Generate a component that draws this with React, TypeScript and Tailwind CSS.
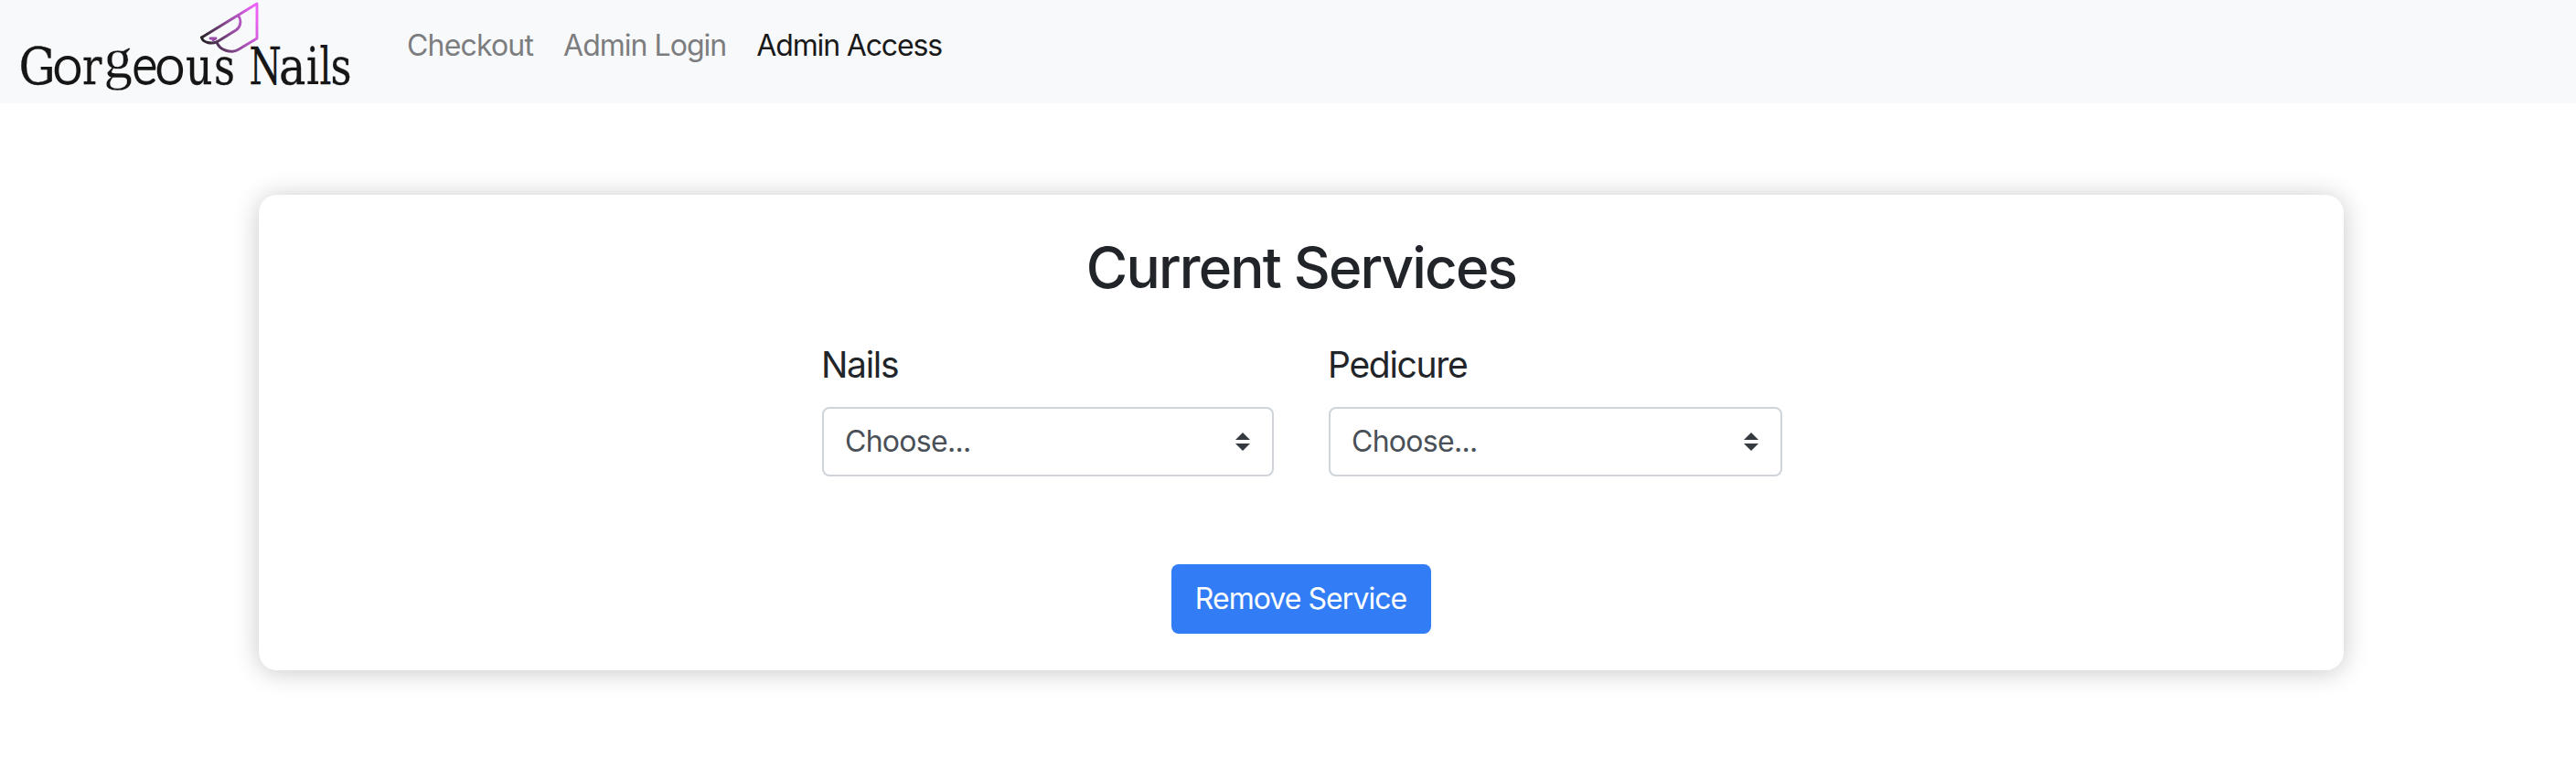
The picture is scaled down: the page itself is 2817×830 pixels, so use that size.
import React from "react";

type Glyph = { ch: string; x: number; y?: number; sx: number; face?: "slab" | "round" | "book" };

const letters: Glyph[] = [
  { ch: "G", x: 20.5, sx: 0.9 },
  { ch: "o", x: 57.5, sx: 0.98, face: "round" },
  { ch: "r", x: 90, sx: 0.8 },
  { ch: "g", x: 113.5, y: 85, sx: 0.98, face: "book" },
  { ch: "e", x: 144.5, sx: 0.88, face: "round" },
  { ch: "o", x: 169.5, sx: 0.98, face: "round" },
  { ch: "u", x: 203, sx: 0.82 },
  { ch: "s", x: 234, sx: 0.8 },
  { ch: "N", x: 272.5, sx: 0.72 },
  { ch: "a", x: 305, sx: 0.88 },
  { ch: "i", x: 335, sx: 0.78 },
  { ch: "l", x: 349.5, sx: 0.72 },
  { ch: "s", x: 361.5, sx: 0.8 },
];

const faces = {
  slab: "font-['DejaVu_Serif',serif] text-[56px] stroke-[#161616] stroke-[0.3px]",
  round: "font-['Lato',sans-serif] font-light text-[60px] stroke-[#161616] stroke-[1.8px]",
  book: "font-['Liberation_Serif',serif] text-[64px] stroke-[#f8f9fb] stroke-[0.3px]",
};

function Logo() {
  return (
    <svg width="445" height="113" viewBox="0 0 445 113" className="shrink-0" aria-label="Gorgeous Nails">
      <defs>
        <linearGradient id="nail" gradientUnits="userSpaceOnUse" x1="220" y1="44" x2="281" y2="20">
          <stop offset="0" stopColor="#242024" />
          <stop offset="0.5" stopColor="#8b4a96" />
          <stop offset="1" stopColor="#ea62f7" />
        </linearGradient>
      </defs>
      <g fill="#161616">
        {letters.map((l, i) => (
          <text
            key={i}
            className={faces[l.face ?? "slab"]}
            transform={`translate(${l.x} ${l.y ?? 92}) scale(${l.sx} 1)`}
          >
            {l.ch}
          </text>
        ))}
      </g>
      <g fill="none" stroke="url(#nail)" strokeWidth="2.9" strokeLinecap="round" strokeLinejoin="round">
        <path d="M220.500 41 281 4V42L261 54C253 59 240 55 237 46" />
        <path d="M260.500 17C264 21 264 29 258 33L237 46C231 48 222 47 220.500 41" />
        <path stroke="#9a4fa6" d="M230 42h6l-3 1.800" />
      </g>
    </svg>
  );
}

function Picker({ label, width }: { label: string; width: string }) {
  return (
    <div className={width}>
      <label className="-ml-px block text-[39px] leading-[48px] tracking-[-1.3px]">{label}</label>
      <div className="relative mt-[22px]">
        <select className="block h-[76px] w-full appearance-none rounded-lg border-2 border-[#ced4da] bg-white px-[23px] text-[32px] tracking-[-0.72px] text-[#495057]">
          <option>Choose...</option>
        </select>
        <svg
          width="16"
          height="20"
          viewBox="0 0 4 5"
          className="pointer-events-none absolute top-[28px] right-[26px]"
        >
          <path fill="#343a40" d="M2 0L0 2h4zm0 5L0 3h4z" />
        </svg>
      </div>
    </div>
  );
}

export default function App() {
  return (
    <div className="min-h-[830px] bg-white font-['Inter',sans-serif] text-[#212529]">
      <header className="flex h-[113px] items-start bg-[#f8f9fb]">
        <Logo />
        <nav className="flex gap-[33px] pt-[26px] text-[32px] leading-[48px]">
          <a className="tracking-[-0.83px] text-[#7c7d7e]">Checkout</a>
          <a className="tracking-[-0.97px] text-[#7c7d7e]">Admin Login</a>
          <a className="tracking-[-1.15px] text-[#191919]">Admin Access</a>
        </nav>
      </header>
      <main className="mt-[100px] ml-[283px] flex h-[520px] w-[2280px] flex-col items-center rounded-[20px] bg-white pt-[42px] shadow-[0_2px_28px_rgba(0,0,0,0.22)]">
        <h1 className="text-[62px] leading-[76px] font-medium tracking-[-1.85px]">Current Services</h1>
        <div className="mt-[44px] flex gap-[60px] pl-[2px]">
          <Picker label="Nails" width="w-[494px]" />
          <Picker label="Pedicure" width="w-[496px]" />
        </div>
        <button className="mt-24 h-[76px] w-[284px] rounded-lg bg-[#327df6] pr-px text-[32px] tracking-[-0.95px] text-white">
          Remove Service
        </button>
      </main>
    </div>
  );
}
